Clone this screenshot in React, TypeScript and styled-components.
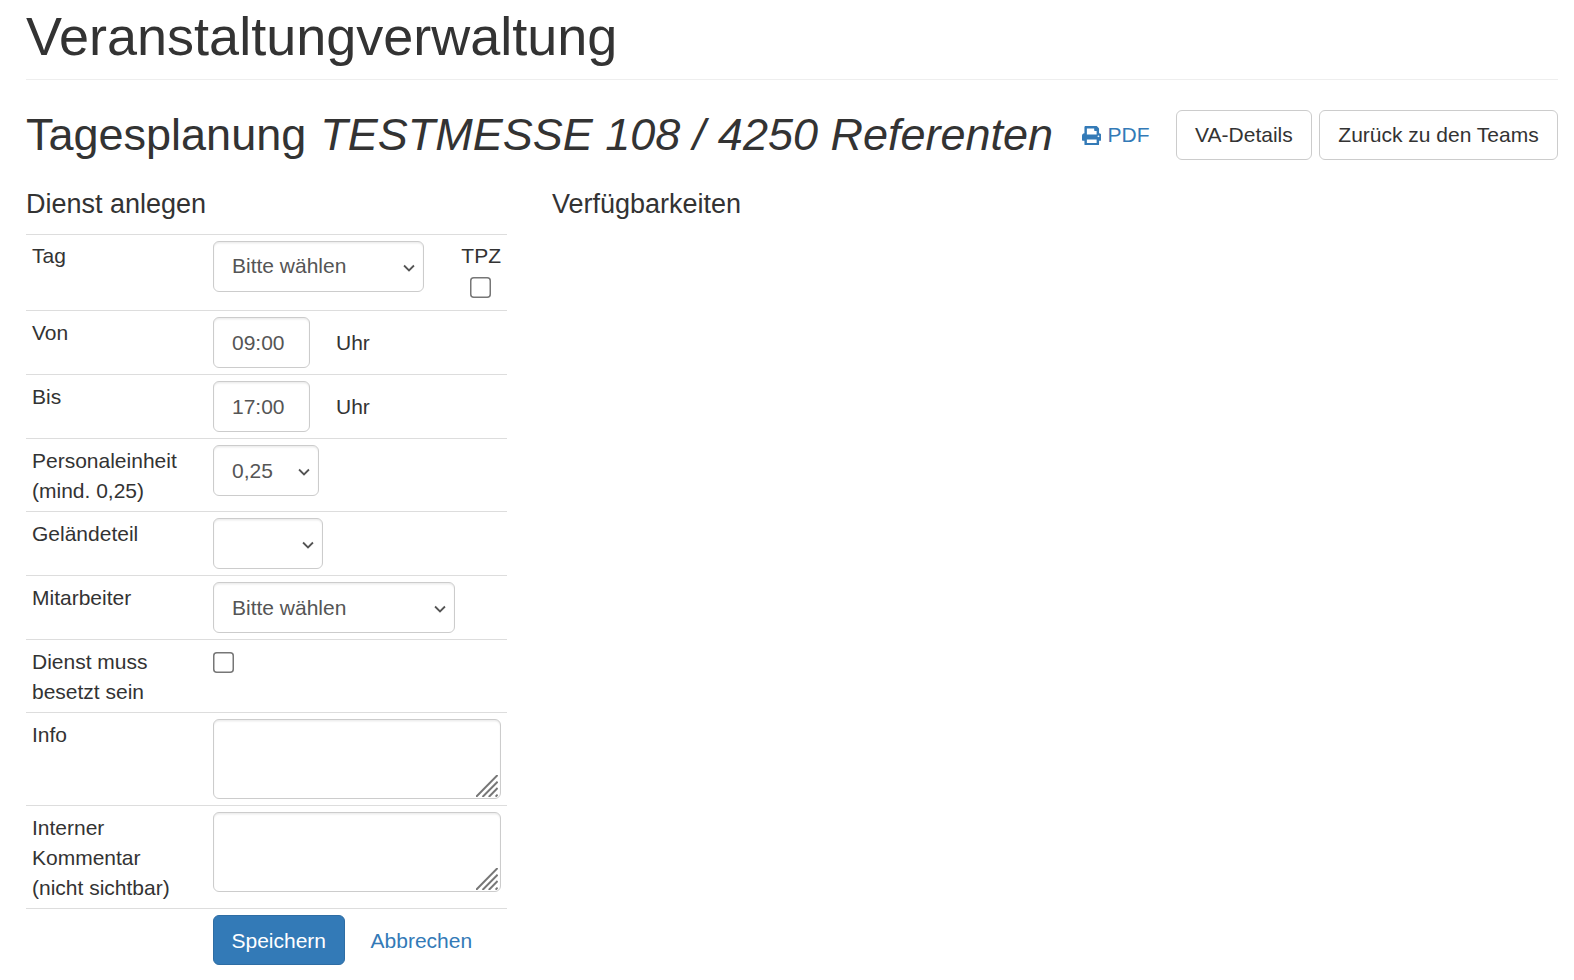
import React from "react";
import styled, { createGlobalStyle } from "styled-components";
import { FaPrint } from "react-icons/fa";

const Global = createGlobalStyle`
  html, body { margin: 0; padding: 0; background: #fff; }
  body {
    zoom: 1.5;
    font-family: "Liberation Sans", Arial, sans-serif;
    font-size: 14px;
    line-height: 20px;
    color: #333;
  }
  * { box-sizing: border-box; }
`;

const chevron =
  "data:image/svg+xml,%3Csvg xmlns='http://www.w3.org/2000/svg' width='8' height='5' viewBox='0 0 8 5'%3E%3Cpath d='M.7.9 4 4 7.3.9' fill='none' stroke='%23555' stroke-width='1.25'/%3E%3C/svg%3E";

const Page = styled.div`
  padding: 0 10.67px 0 17.33px;
`;

const PageHeader = styled.header`
  padding: 4.67px 0 8.67px;
  border-bottom: 1px solid #eee;
  margin-bottom: 19.66px;
`;

const Title = styled.h1`
  margin: 0;
  font-size: 36px;
  font-weight: 500;
  line-height: 39.6px;
`;

const TitleRow = styled.div`
  display: flex;
  justify-content: space-between;
  align-items: center;
  margin-bottom: 19.63px;
`;

const Subtitle = styled.h2`
  margin: 0 0 0.67px;
  font-size: 30px;
  font-weight: 500;
  line-height: 33px;
  white-space: nowrap;
`;

const Event = styled.em`
  margin-left: 1px;
  font-style: italic;
`;

const Actions = styled.div`
  display: flex;
  align-items: center;
  gap: 4.67px;
`;

const PdfLink = styled.a`
  display: inline-flex;
  align-items: center;
  gap: 4.3px;
  padding: 7px 12.87px 7px 12px;
  color: #337ab7;
  text-decoration: none;
  svg { width: 13px; height: 13px; }
`;

const Button = styled.button`
  height: 33.4px;
  padding: 0 12.2px;
  font: inherit;
  color: #333;
  background: #fff;
  border: 1px solid #ccc;
  border-radius: 4px;
`;

const PrimaryButton = styled.button`
  height: 33.4px;
  padding: 0.67px 11.67px 0;
  font: inherit;
  color: #fff;
  background: #337ab7;
  border: 1px solid #2e6da4;
  border-radius: 4px;
`;

const Columns = styled.div`
  display: flex;
`;

const FormColumn = styled.section`
  flex: 0 0 350.67px;
  padding-right: 30px;
`;

const SideColumn = styled.section`
  flex: 1;
`;

const SectionTitle = styled.h4`
  margin: 0 0 9.3px;
  font-size: 18px;
  font-weight: 500;
  line-height: 19.8px;
`;

const Row = styled.div`
  display: flex;
  align-items: flex-start;
  padding: 4px;
  border-top: 1px solid #ddd;
`;

const Label = styled.div`
  flex: 0 0 120.67px;
  padding: 0.33px 6px 0 0;
  margin-bottom: -0.33px;
`;

const fieldStyles = `
  height: 34px;
  padding: 6px 12px;
  font: inherit;
  color: #555;
  background-color: #fff;
  border: 1px solid #ccc;
  border-radius: 4px;
  box-shadow: inset 0 1px 1px rgba(0, 0, 0, .075);
`;

const Select = styled.select<{ $width: number }>`
  ${fieldStyles}
  width: ${(p) => p.$width}px;
  padding-right: 16px;
  appearance: none;
  background-image: url("${chevron}");
  background-repeat: no-repeat;
  background-size: 8px 5px;
  background-position: right 5.25px top calc(50% + 0.6px);
`;

const TimeInput = styled.input`
  ${fieldStyles}
  width: 64.67px;
  padding: 6.33px 12px 5.67px;
`;

const Unit = styled.span`
  margin-left: 17.33px;
  line-height: 34px;
`;

const TpzCell = styled.div`
  margin-left: auto;
  display: flex;
  flex-direction: column;
  align-items: center;
`;

const Check = styled.input`
  display: block;
  width: 14px;
  height: 14px;
  margin: 4px 0 3.67px;
`;

const TpzCheck = styled(Check)`
  margin-right: 1.33px;
  margin-bottom: 4.27px;
`;

const TextAreaBox = styled.div`
  position: relative;
  width: 192px;
  height: 53.33px;
`;

const TextArea = styled.textarea`
  ${fieldStyles}
  display: block;
  width: 100%;
  height: 100%;
  resize: none;
`;

const Grip = styled.svg`
  position: absolute;
  right: 1.67px;
  bottom: 1.67px;
  width: 14.67px;
  height: 14.67px;
  pointer-events: none;
`;

const ActionRow = styled(Row)`
  padding-left: 124.67px;
  align-items: center;
`;

const CancelLink = styled.a`
  margin-left: 5.33px;
  padding: 6.67px 12px 6px;
  color: #337ab7;
  text-decoration: none;
`;

function NoteField() {
  return (
    <TextAreaBox>
      <TextArea />
      <Grip viewBox="0 0 22 22" fill="none" stroke="#777" strokeWidth="2">
        <path d="M0 22 21.6 0M6.5 22 21.6 6.7M12.8 22 21.6 13M19.6 21.6 21.6 19.6" />
      </Grip>
    </TextAreaBox>
  );
}

export default function App() {
  return (
    <>
      <Global />
      <Page>
        <PageHeader>
          <Title>Veranstaltungverwaltung</Title>
        </PageHeader>
        <TitleRow>
          <Subtitle>
            Tagesplanung <Event>TESTMESSE 108 / 4250 Referenten</Event>
          </Subtitle>
          <Actions>
            <PdfLink href="#">
              <FaPrint />
              PDF
            </PdfLink>
            <Button>VA-Details</Button>
            <Button>Zurück zu den Teams</Button>
          </Actions>
        </TitleRow>
        <Columns>
          <FormColumn>
            <SectionTitle>Dienst anlegen</SectionTitle>
            <Row>
              <Label>Tag</Label>
              <Select $width={140.67} defaultValue="">
                <option value="">Bitte wählen</option>
              </Select>
              <TpzCell>
                TPZ
                <TpzCheck type="checkbox" />
              </TpzCell>
            </Row>
            <Row>
              <Label>Von</Label>
              <TimeInput defaultValue="09:00" />
              <Unit>Uhr</Unit>
            </Row>
            <Row>
              <Label>Bis</Label>
              <TimeInput defaultValue="17:00" />
              <Unit>Uhr</Unit>
            </Row>
            <Row>
              <Label>
                Personaleinheit
                <br />
                (mind. 0,25)
              </Label>
              <Select $width={70.67} defaultValue="0,25">
                <option>0,25</option>
              </Select>
            </Row>
            <Row>
              <Label>Geländeteil</Label>
              <Select $width={73.33} defaultValue="">
                <option value=""></option>
              </Select>
            </Row>
            <Row>
              <Label>Mitarbeiter</Label>
              <Select $width={161.33} defaultValue="">
                <option value="">Bitte wählen</option>
              </Select>
            </Row>
            <Row>
              <Label>
                Dienst muss
                <br />
                besetzt sein
              </Label>
              <Check type="checkbox" />
            </Row>
            <Row>
              <Label>Info</Label>
              <NoteField />
            </Row>
            <Row>
              <Label>
                Interner
                <br />
                Kommentar
                <br />
                (nicht sichtbar)
              </Label>
              <NoteField />
            </Row>
            <ActionRow>
              <PrimaryButton>Speichern</PrimaryButton>
              <CancelLink href="#">Abbrechen</CancelLink>
            </ActionRow>
          </FormColumn>
          <SideColumn>
            <SectionTitle>Verfügbarkeiten</SectionTitle>
          </SideColumn>
        </Columns>
      </Page>
    </>
  );
}
